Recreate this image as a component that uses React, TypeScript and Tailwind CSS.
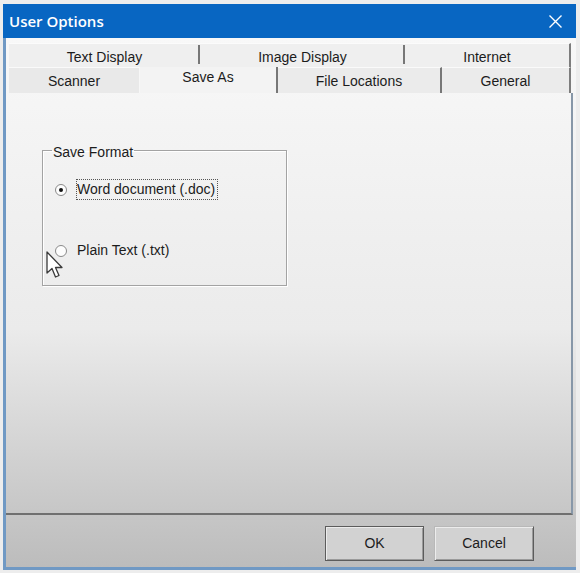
import React from "react";

export default function App() {
  return (
    <div className="w-[580px] h-[573px] bg-[#ededed] pt-[4px] pl-[3px] overflow-hidden relative font-['Liberation_Sans',Arial,sans-serif] text-[14px] leading-[19px] text-[#1c1c1c]">
      <div className="w-[573px] h-[566px] flex flex-col">
        {/* Title bar */}
        <div className="h-[34px] bg-[#0866c2] flex items-center justify-between pl-[6px] pr-[14px]">
          <span className="font-['Open_Sans',sans-serif] font-semibold text-[15px] text-white leading-none">
            User Options
          </span>
          <svg width="13" height="13" viewBox="0 0 13 13" className="block">
            <path d="M0.5 0.5 L12.5 12.5 M12.5 0.5 L0.5 12.5" stroke="white" strokeWidth="1.4" fill="none" />
          </svg>
        </div>

        {/* Body */}
        <div className="flex-1 flex flex-col border-l-[3px] border-b-[3px] border-[#7099c4] bg-linear-to-b from-[#f8f8f8] via-[#ebebeb] via-55% to-[#bcbcbc]">
          {/* Tab row 1 */}
          <div className="mt-[5px] ml-[3px] h-[24px] flex">
            <div className="w-[191px] h-full flex items-center justify-center bg-[#efefef] border-t border-t-[#fbfbfb] relative">
              <span className="relative top-[2px]">Text Display</span>
              <div className="absolute right-0 top-[1px] h-[19px] w-[2px] bg-[#777777]" />
            </div>
            <div className="w-[205px] h-full flex items-center justify-center bg-[#efefef] border-t border-t-[#fbfbfb] relative">
              <span className="relative top-[2px]">Image Display</span>
              <div className="absolute right-0 top-[1px] h-[19px] w-[2px] bg-[#777777]" />
            </div>
            <div className="w-[166px] h-full flex items-center justify-center bg-[#efefef] border-t border-t-[#fbfbfb] border-r-2 border-r-[#7d7d7d]">
              <span className="relative top-[2px]">Internet</span>
            </div>
          </div>

          {/* Tab row 2 */}
          <div className="ml-[3px] h-[26px] flex">
            <div className="w-[131px] h-full flex items-center justify-center bg-[#e9e9e9] border-t border-t-[#fafafa] border-r border-r-[#f7f7f7]">
              <span className="relative top-[1px]">Scanner</span>
            </div>
            <div className="w-[138px] h-full flex items-start justify-center pt-[1px] bg-[#f3f3f3] border-r-2 border-r-[#777777]">
              <span>Save As</span>
            </div>
            <div className="w-[164px] h-full flex items-center justify-center bg-[#ebebeb] border-t border-t-[#fafafa] border-r-2 border-r-[#777777]">
              <span className="relative top-[1px]">File Locations</span>
            </div>
            <div className="w-[129px] h-full flex items-center justify-center bg-[#ebebeb] border-t border-t-[#fafafa] border-r-2 border-r-[#7d7d7d]">
              <span className="relative top-[1px]">General</span>
            </div>
          </div>

          {/* Panel */}
          <div className="w-[567px] h-[422px] border-r-2 border-r-[#8797a8] border-b-2 border-b-[#707070] pt-[49px] pl-[36px]">
            <fieldset className="w-[245px] h-[144px] border border-[#a3a3a3] shadow-[inset_1px_1px_0_#ffffff,1px_1px_0_#ffffff]">
              <legend className="ml-[9px] px-[1px] leading-[16px]">
                <span className="relative top-[2px]">Save Format</span>
              </legend>
              <div className="pl-[12px]">
                <div className="mt-[21px] flex items-center h-[21px]">
                  <div className="w-[12px] h-[12px] rounded-full border border-[#8a8a8a] bg-[#fdfdfd] flex items-center justify-center">
                    <div className="w-[4px] h-[4px] rounded-full bg-[#111111]" />
                  </div>
                  <span className="ml-[9px] border border-dotted border-[#555555] pr-[2px]">
                    Word document (.doc)
                  </span>
                </div>
                <div className="mt-[40px] flex items-center h-[21px]">
                  <div className="w-[12px] h-[12px] rounded-full border border-[#8a8a8a] bg-[#fdfdfd]" />
                  <span className="ml-[10px]">Plain Text (.txt)</span>
                </div>
              </div>
            </fieldset>
          </div>

          {/* Footer */}
          <div className="flex-1 flex justify-end items-start pt-[11px] pr-[42px] gap-[10px]">
            <button className="w-[99px] h-[35px] bg-[#d2d2d2] border border-[#5c5c5c] shadow-[inset_1px_1px_0_#ececec,inset_-1px_-1px_0_#9a9a9a] flex items-center justify-center text-[#1c1c1c]">
              OK
            </button>
            <button className="w-[100px] h-[35px] bg-[#d2d2d2] border border-[#b8b8b8] border-r-[#5c5c5c] border-b-[#5c5c5c] shadow-[inset_1px_1px_0_#ececec,inset_-1px_-1px_0_#9a9a9a] flex items-center justify-center text-[#1c1c1c]">
              Cancel
            </button>
          </div>
        </div>
      </div>

      {/* Mouse cursor */}
      <svg width="20" height="28" viewBox="0 0 20 28" className="absolute left-[46px] top-[251px]">
        <path
          d="M1 1 L1 22 L6 17.5 L9.5 26 L13 24.5 L9.5 16.5 L16 16.5 Z"
          fill="#ffffff"
          stroke="#3a3a3a"
          strokeWidth="1.3"
          strokeLinejoin="round"
        />
      </svg>
    </div>
  );
}
